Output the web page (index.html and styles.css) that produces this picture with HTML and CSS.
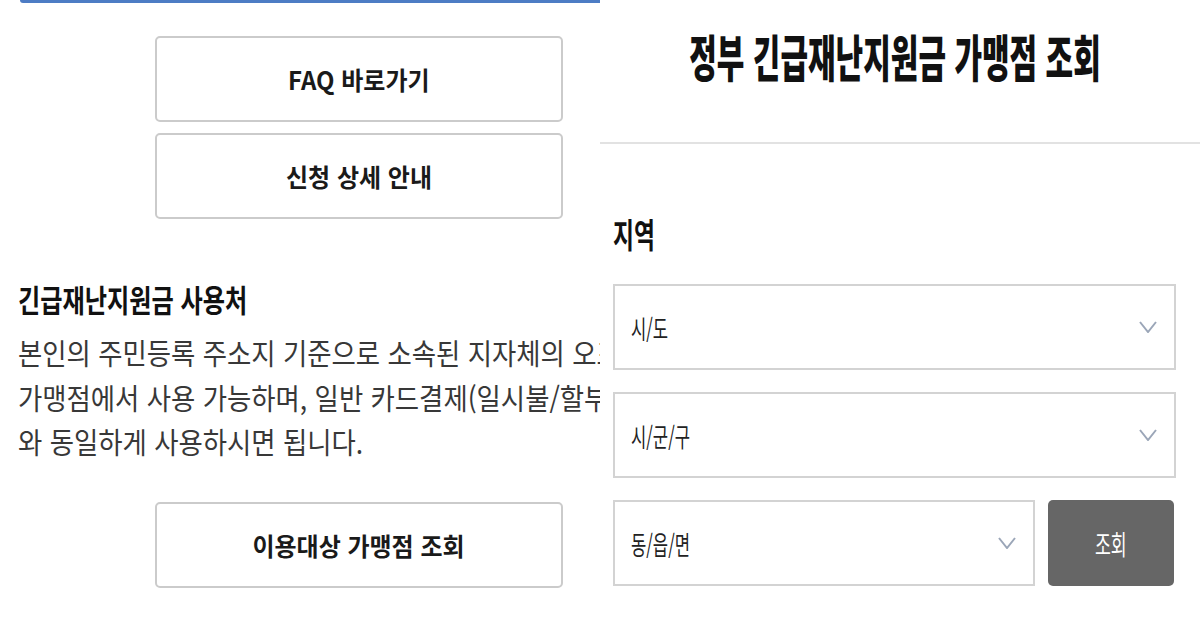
FILE: index.html
```html
<!DOCTYPE html>
<html lang="ko">
<head>
  <meta charset="UTF-8">
  <title>긴급재난지원금 가맹점 조회</title>
  <meta name="viewport" content="width=device-width, initial-scale=1.0">
  <link rel="stylesheet" href="styles.css">
</head>
<body>
  <div class="page">
    <section class="panel panel-left">
      <div class="notice-edge"></div>

      <div class="link-list">
        <a class="link-btn" href="#"><span>FAQ 바로가기</span></a>
        <a class="link-btn" href="#"><span>신청 상세 안내</span></a>
      </div>

      <h2 class="usage-title"><span>긴급재난지원금 사용처</span></h2>
      <p class="usage-text"><span>본인의 주민등록 주소지 기준으로 소속된 지자체의 오프라인<br>가맹점에서 사용 가능하며, 일반 카드결제(일시불/할부)<br>와 동일하게 사용하시면 됩니다.</span></p>

      <div class="link-list link-list-bottom">
        <a class="link-btn" href="#"><span>이용대상 가맹점 조회</span></a>
      </div>
    </section>

    <section class="panel panel-right">
      <header class="search-head">
        <h1><span>정부 긴급재난지원금 가맹점 조회</span></h1>
      </header>

      <form class="search-body">
        <h3 class="field-label"><span>지역</span></h3>

        <div class="select">
          <span class="select-text">시/도</span>
          <svg class="chevron" width="18" height="12" viewBox="0 0 18 12"><polyline points="1,1 9,11 17,1"/></svg>
        </div>

        <div class="select">
          <span class="select-text">시/군/구</span>
          <svg class="chevron" width="18" height="12" viewBox="0 0 18 12"><polyline points="1,1 9,11 17,1"/></svg>
        </div>

        <div class="search-row">
          <div class="select">
            <span class="select-text">동/읍/면</span>
            <svg class="chevron" width="18" height="12" viewBox="0 0 18 12"><polyline points="1,1 9,11 17,1"/></svg>
          </div>
          <button type="button" class="search-btn"><span>조회</span></button>
        </div>
      </form>
    </section>
  </div>
</body>
</html>
```

FILE: styles.css
```css
body {
  margin: 0;
  background: #fff;
  font-family: "Noto Sans CJK KR", "Noto Sans", sans-serif;
  color: #111;
}
.page {
  display: flex;
  width: 1200px;
  height: 630px;
}
.panel {
  width: 600px;
  height: 630px;
  overflow: hidden;
  background: #fff;
}

/* left screenshot */
.notice-edge {
  margin-left: 20px;
  height: 3px;
  background: #4d7cc4;
  border-bottom-left-radius: 6px;
}
.link-list {
  display: flex;
  flex-direction: column;
  gap: 11px;
  margin: 33px 0 0 155px;
  width: 408px;
}
.link-btn {
  display: flex;
  align-items: center;
  justify-content: center;
  height: 86px;
  box-sizing: border-box;
  border: 2px solid #cbcbcb;
  border-radius: 5px;
  color: #1a1a1a;
  text-decoration: none;
  font-size: 25px;
  font-weight: bold;
}
.link-btn span {
  display: inline-block;
  transform: scaleX(0.96);
}
.usage-title {
  margin: 62px 0 0 18px;
  font-size: 31px;
  line-height: 36px;
  font-weight: bold;
  color: #111;
}
.usage-title span,
.usage-text span {
  display: inline-block;
  transform-origin: left center;
}
.usage-title span {
  transform: scaleX(0.78);
}
.usage-text {
  margin: 13px 0 0 18px;
  font-size: 29px;
  line-height: 44.5px;
  color: #383838;
  white-space: nowrap;
}
.usage-text span {
  transform: scaleX(0.91);
}
.link-list-bottom {
  margin-top: 38px;
}

/* right screenshot */
.search-head {
  height: 142px;
  border-bottom: 2px solid #e2e2e2;
}
.search-head h1 {
  display: flex;
  justify-content: center;
  margin: 0;
  padding: 22px 10px 0 0;
  font-size: 50px;
  line-height: 66px;
  font-weight: 900;
  white-space: nowrap;
}
.search-head h1 span {
  display: inline-block;
  transform: scaleX(0.6);
}
.search-body {
  padding: 0 24px 0 13px;
  display: flex;
  flex-direction: column;
  gap: 22px;
}
.field-label {
  margin: 70px 0 8px;
  font-size: 34px;
  line-height: 40px;
  font-weight: bold;
}
.field-label span,
.select-text {
  display: inline-block;
  transform-origin: left center;
}
.field-label span {
  transform: scaleX(0.67);
}
.select {
  display: flex;
  align-items: center;
  justify-content: space-between;
  height: 86px;
  box-sizing: border-box;
  padding: 0 17px 0 16px;
  border: 2px solid #d3d3d3;
  background: #fff;
}
.select-text {
  font-size: 26px;
  color: #222;
  transform: scaleX(0.64);
}
.chevron {
  fill: none;
  stroke: #9ba6b8;
  stroke-width: 2;
}
.search-row {
  display: flex;
  gap: 13px;
  padding-right: 2px;
}
.search-row .select {
  flex: 1;
}
.search-btn {
  width: 126px;
  height: 86px;
  border: none;
  border-radius: 5px;
  background: #666;
  color: #fff;
  font-family: inherit;
  font-size: 27px;
  cursor: pointer;
}
.search-btn span {
  display: inline-block;
  transform: scaleX(0.64);
}
```
